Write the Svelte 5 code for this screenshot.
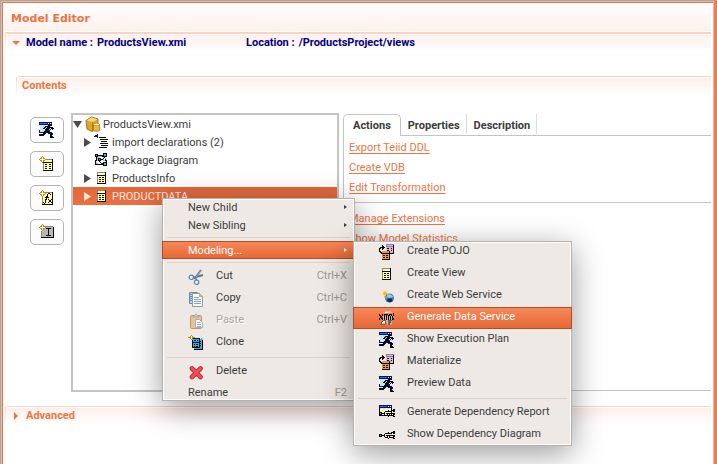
<script>
  const palette = {
    K: '#0a0a0a', N: '#10107c', B: '#2a6fd0', c: '#bfeaf2', W: '#ffffff', Y: '#ffffa0',
    G: '#8a8a7c', g: '#b08a1c', w: '#fff3a8', s: '#b8b8b8', P: '#d9b8e6', p: '#8f7aa0',
    O: '#f59a14', o: '#b8700c', C: '#1fb4f0', D: '#5a5a5a', t: '#d9b79c', r: '#8b5a40', T: '#39c5c5'
  };

  const sprites = {
    run: [
      'NNNNNNNNNNNNN...',
      'NBBBBBBBNWNWN...',
      'NNNNNNNNNKKKN...',
      'cccccccccKKKN...',
      'WcccccKKKKKc....',
      'WccccKNcKKKKKK..',
      'WcccKKcKKKNcKKK.',
      'WcccccKKKNcN.N..',
      'NcccccKKKNN.....',
      'NccccKKKKKN.....',
      'NNNNKKNNKKKKN...',
      '....KKN..NNKKN..',
      'KKKKKN.....KKN..',
      'NKKKN......KK...',
      '...........KKN..',
      '...........KKKK.'
    ],
    table: [
      '................',
      '................',
      '...GGGGGGGGK....',
      '...GYYYYYYYK....',
      '...GYYYYYYYK....',
      '...KKKKKKKKK....',
      '...GYYYYYYYK....',
      '...GYKKYKKYK....',
      '...GYYYYYYYK....',
      '...GYKKYKKYK....',
      '...GYYYYYYYK....',
      '...GYKKYKKYK....',
      '...GYYYYYYYK....',
      '...KKKKKKKKK....'
    ],
    newTable: [
      '...g............',
      '..gwg...........',
      '.gg.gg..........',
      'gw...wgGGGGGGK..',
      '.gg.ggYYYYYYYK..',
      '..gwgYYYYYYYYK..',
      '...gKKKKKKKKKK..',
      '....GYYYYYYYYK..',
      '....GYKKYYKKYK..',
      '....GYYYYYYYYK..',
      '....GYKKYYKKYK..',
      '....GYYYYYYYYK..',
      '....GYKKYYKKYK..',
      '....GYYYYYYYYK..',
      '....KKKKKKKKKK..'
    ],
    newFunction: [
      '...g............',
      '..gwg...........',
      '.gg.ggGGGGGGGK..',
      'gw...wgYYKKYYK..',
      '.gg.ggYYKYYKYK..',
      '..gwgYYYKYYYYK..',
      '...gYYYKKYYYYK..',
      '...GYYKKKKYYYK..',
      '...GYYYKYYYYYK..',
      '...GYYKKYKYYKK..',
      '...GYYKYYYKKYK..',
      '...GYYKYYYKKYK..',
      '...GKYKYYKYYKK..',
      '...GYKYYYYYYYK..',
      '...KKKKKKKKKKK..'
    ],
    newIndex: [
      '...g............',
      '..gwg...........',
      '.gg.ggGGGGGGGG..',
      'gw...wgsssssssK.',
      '.gg.ggsKKKKKssK.',
      '..gwgssssKssssK.',
      '...gsssssKssssK.',
      '..GssssssKssssK.',
      '..GssssssKssssK.',
      '..GssssssKssssK.',
      '..GssssssKssssK.',
      '..GssssKKKKKssK.',
      '..GsssssssssssK.',
      '..KKKKKKKKKKKKK.'
    ],
    imports: [
      '...N............',
      '.NNN............',
      'NNNN............',
      '...N.KKKKKKK....',
      '................',
      '......KKKKKKKK..',
      '................',
      '.......KKKKKK...',
      '................',
      '......KKKKKKKK..',
      '................',
      '.......KKKKKKK..',
      '................',
      '.....KKKKKKKK...'
    ],
    diagram: [
      '................',
      '.........KKKK...',
      '.KKK.....KTTK...',
      '.KTKKKKKKKTTK...',
      '.KKKssssKKKKK...',
      '..KssWWWWsK.....',
      '..KsKKKWWKWs....',
      '..KsKTKKKsWK....',
      '.KKsKKKWWssKK...',
      '.KWWWKWWWWWsK...',
      '.KsWWWKWWKKKK...',
      '.KssWWWKKKTTK...',
      '.KKKKKKKKKTTK...',
      '.........KKKK...'
    ],
    pojo: [
      '.......pppppppp.',
      '...K...pPPPPPPK.',
      '...KK..pppppppK.',
      '.KKKKK.PPPPPPPK.',
      'KK.KK..PKKPPKPK.',
      'K..K...PPPPPPPK.',
      'K......PKKPPKPK.',
      'KK.OOOOOOOKPPPK.',
      '.KKOOOOOOOKPPPK.',
      '..KKKKKKKKKKKKK.',
      '...OOOOOOOK.....',
      '...OKKOKKOK.....',
      '...OOOOOOOK.....',
      '...OKKOKKOK.....',
      '...OOOOOOOK.....',
      '...KKKKKKKK.....'
    ],
    xml: [
      '................',
      '......tttttt....',
      '....ttWWWtttt...',
      '..............K.',
      'K..K.KKKK.KKK.K.',
      'KK.K.K.K.KK.K.K.',
      '.KKttKtKtKtKtK..',
      '.KKrtKtKtKtKtK..',
      'K.KKtKtKtKtKtKK.',
      'K..KtKtKtKtKsKK.',
      '....rrrttrrDD...',
      '...rWWrttrDDs...',
      '..rWWWrttrDDs...',
      '..rtttr.trDss...',
      '.rrrrr..trDs....'
    ],
    report: [
      'NNNNNNNNNNNNN...',
      'NBBBBBBBNWNWN...',
      'NNNNNNNNNNNNN...',
      'KccccccccccYK...',
      'KYYYYYYYYYYYK.KK',
      'KYYYYYYYYKYYKKKK',
      'KYYYYYKKKKKKK.KK',
      'KKKYYKYYYYYYK...',
      'KTKKKKYKKKKKKKKK',
      'KKKYYKYYKYKYK.KK',
      'KKKKKKKKKKKKKKK.',
      '.........K....KK'
    ],
    dependency: [
      '................',
      '................',
      '................',
      '................',
      '..............KK',
      '.........K..KKKK',
      '......KKKKKKK.KK',
      'KKK..K..........',
      'KTKKKK.KKKKKKKKK',
      'KKK..K..K.K...KK',
      '......KKK.KKKKK.',
      '.........K....KK'
    ],
    clone: [
      '...g............',
      '..gwg...........',
      'gggwggg.........',
      '..gwgKKKKKKK.ss.',
      '...gCCCCCCCKCCs.',
      '....KCKKCKCKCCK.',
      '....KCCCCCCKKCK.',
      '....KKKKKKKKCCK.',
      '....KCCCCCCKKCK.',
      '....KCKCKKCKCCK.',
      '....KCCCCCCKKCK.',
      '....KCKCKKCKCCK.',
      '....KKKKKKKKCCK.',
      '......GCCCCCCCK.',
      '......KKKKKKKKK.'
    ]
  };

  function runs(rows) {
    const out = [];
    rows.forEach((row, y) => {
      let x = 0;
      while (x < row.length) {
        let end = x + 1;
        while (end < row.length && row[end] === row[x]) end++;
        if (row[x] !== '.') out.push({ x, y, w: end - x, fill: palette[row[x]] });
        x = end;
      }
    });
    return out;
  }

  const tools = [
    { icon: 'run', label: 'Preview data' },
    { icon: 'newTable', label: 'New table' },
    { icon: 'newFunction', label: 'New function' },
    { icon: 'newIndex', label: 'New index' }
  ];

  const nodes = [
    { icon: 'imports', label: 'import declarations (2)', arrow: true },
    { icon: 'diagram', label: 'Package Diagram' },
    { icon: 'table', label: 'ProductsInfo', arrow: true },
    { icon: 'table', label: 'PRODUCTDATA', arrow: true, selected: true }
  ];

  const menu = [
    { label: 'New Child', more: true },
    { label: 'New Sibling', more: true },
    null,
    { label: 'Modeling...', more: true, active: true },
    null,
    { icon: 'cut', label: 'Cut', keys: 'Ctrl+X' },
    { icon: 'copy', label: 'Copy', keys: 'Ctrl+C' },
    { icon: 'paste', label: 'Paste', keys: 'Ctrl+V', disabled: true },
    { icon: 'clone', label: 'Clone' },
    null,
    { icon: 'delete', label: 'Delete' },
    { label: 'Rename', keys: 'F2' }
  ];

  const submenu = [
    { icon: 'pojo', label: 'Create POJO' },
    { icon: 'table', label: 'Create View' },
    { icon: 'web', label: 'Create Web Service' },
    { icon: 'xml', label: 'Generate Data Service', active: true },
    { icon: 'run', label: 'Show Execution Plan' },
    { icon: 'pojo', label: 'Materialize' },
    { icon: 'run', label: 'Preview Data' },
    null,
    { icon: 'report', label: 'Generate Dependency Report' },
    { icon: 'dependency', label: 'Show Dependency Diagram' }
  ];
</script>

{#snippet icon(name)}
  <svg class="icon" viewBox="0 0 16 16" aria-hidden="true">
    {#if sprites[name]}
      <g shape-rendering="crispEdges">
        {#each runs(sprites[name]) as r}
          <rect x={r.x} y={r.y} width={r.w} height="1" fill={r.fill} />
        {/each}
      </g>
    {:else if name === 'cut'}
      <path d="M13 1 6.5 10M15 6 6 8.5" stroke="#5f7590" stroke-width="2" fill="none" />
      <path d="M12.8 1.5 8 8.5" stroke="#a8b6c6" stroke-width=".7" />
      <circle cx="3.3" cy="8.3" r="2.2" fill="#edf3fa" stroke="#5685bd" stroke-width="1.2" />
      <circle cx="8.6" cy="13.2" r="2.2" fill="#edf3fa" stroke="#5685bd" stroke-width="1.2" />
      <path d="m7.8 9.2.8 2" stroke="#5f7590" stroke-width="1.4" />
    {:else if name === 'copy'}
      <path d="M1.5 1.5h8v11h-8z" fill="#c2d9e6" stroke="#6a8aa5" />
      <path d="M2 3.5h3m-3 2h3m-3 2h3m-3 2h3" stroke="#6787a5" />
      <path d="M4.5 2.5h7l3 3v10h-10z" fill="#f5f9fb" stroke="#8da19a" />
      <path d="M11.5 2.5v3h3z" fill="#e3cf75" stroke="#b39b4a" stroke-width=".7" />
      <path d="M6 6.5h5m-5 2h7m-7 2h7m-7 2h7" stroke="#83a6cf" />
    {:else if name === 'paste'}
      <rect x="2.5" y="2.5" width="11" height="13" rx="1" fill="#e9c48c" stroke="#ba9765" />
      <path d="M5 4V2.5h2L8 .8l1 1.7h2V4z" fill="#d9dcdf" stroke="#9299a3" stroke-width=".8" />
      <path d="M7.5 6.5h4l3 3v5h-7z" fill="#f7fafc" stroke="#9eb2c4" />
      <path d="M9 9.5h3m-3 2h4m-4 2h4" stroke="#90aed0" />
    {:else if name === 'delete'}
      <path d="m4 4.5 8.5 8.5M12.5 4.5 4 13" stroke="#c8252d" stroke-width="4.6" stroke-linecap="round" />
      <path d="m4 4.5 8.5 8.5M12.5 4.5 4 13" stroke="#ea5055" stroke-width="3" stroke-linecap="round" />
    {:else if name === 'web'}
      <circle cx="6" cy="5.5" r="3.2" fill="#fde7a8" />
      <circle cx="6" cy="5.5" r="2" fill="#f8b637" />
      <circle cx="10.5" cy="10" r="4.5" fill="#3b78b8" />
      <path d="M8 6.5c3-1 5 .2 6.6 2.5-2 1-3.3-.5-4 1.500L8 9z" fill="#9cc4e4" />
      <path d="M8 12c1-2 3.5-2 5-1l.5 2c-2 2-4.5 1.500-5.500-1z" fill="#172b50" />
      <path d="M5 8.500 8 8l-1 4z" fill="#79b65a" />
    {:else if name === 'model'}
      <path d="M1 4.500 6.500 1 13 3v9l-6 3.500L2 13z" fill="#e0a32f" stroke="#a8731d" />
      <path d="M1.500 4.500 6.500 1.500l6 2L7.500 6z" fill="#f8d877" />
      <path d="M7.500 6v9" stroke="#b47c1c" />
      <path d="M8.500 8.500v5.500c0 1.800 6 1.800 6 0V8.500z" fill="#edb846" stroke="#a8731d" stroke-width=".8" />
      <ellipse cx="11.500" cy="8.500" rx="3" ry="1.300" fill="#fff0bd" stroke="#b47c1c" stroke-width=".7" />
    {/if}
  </svg>
{/snippet}

{#snippet items(list)}
  {#each list as item}
    {#if item}
      <button class="item" class:with-icon={item.icon} class:active={item.active} disabled={item.disabled} role="menuitem">
        {#if item.icon}{@render icon(item.icon)}{/if}
        <span class="label">{item.label}</span>
        {#if item.keys}<span class="keys">{item.keys}</span>{/if}
        {#if item.more}<svg class="more" viewBox="0 0 3 4" aria-hidden="true"><path d="M0 0 3 2 0 4z" fill="currentColor" /></svg>{/if}
      </button>
    {:else}
      <hr />
    {/if}
  {/each}
{/snippet}

<div class="frame">
  <main>
    <h1>Model Editor</h1>

    <section class="overview">
      <button class="toggle" aria-label="Collapse overview" aria-expanded="true">
        <svg width="8" height="4" viewBox="0 0 8 4"><path d="M0 0h8L4 4z" fill="#ee7443" /></svg>
      </button>
      <dl>
        <div class="model-name"><dt>Model name :</dt><dd>ProductsView.xmi</dd></div>
        <div><dt>Location :</dt><dd>/ProductsProject/views</dd></div>
      </dl>
    </section>

    <section class="contents">
      <h2>Contents</h2>
      <div class="columns">
        <div class="tools">
          {#each tools as tool}
            <button class="tool" aria-label={tool.label}>{@render icon(tool.icon)}</button>
          {/each}
        </div>

        <div class="tree" role="tree" aria-label="Model contents">
          <div class="node root" role="treeitem" aria-selected="false" aria-expanded="true" tabindex="0">
            <svg class="twist" viewBox="0 0 9 9"><path d="M0 1h9L4.500 8z" fill="currentColor" /></svg>
            {@render icon('model')}
            <span>ProductsView.xmi</span>
          </div>
          {#each nodes as node}
            <div class="node" class:selected={node.selected} role="treeitem" aria-selected={!!node.selected} tabindex="-1">
              <svg class="twist" viewBox="0 0 9 9">{#if node.arrow}<path d="M1 0v9l7-4.500z" fill="currentColor" />{/if}</svg>
              {@render icon(node.icon)}
              <span>{node.label}</span>
            </div>
          {/each}
        </div>

        <div class="folder">
          <div class="tabs" role="tablist">
            <button class="tab current" role="tab" aria-selected="true">Actions</button>
            <button class="tab" role="tab" aria-selected="false">Properties</button>
            <button class="tab" role="tab" aria-selected="false">Description</button>
            <span class="rest"></span>
          </div>
          <div class="panel" role="tabpanel">
            <nav>
              <a href="#export">Export Teiid DDL</a>
              <a href="#vdb">Create VDB</a>
              <a href="#edit">Edit Transformation</a>
            </nav>
            <nav>
              <a href="#extensions">Manage Extensions</a>
              <a href="#statistics">Show Model Statistics</a>
            </nav>
          </div>
        </div>
      </div>
    </section>

    <section class="advanced">
      <button class="toggle" aria-label="Expand advanced" aria-expanded="false">
        <svg width="4" height="8" viewBox="0 0 4 8"><path d="M0 0v8l4-4z" fill="#ee7443" /></svg>
      </button>
      <h2>Advanced</h2>
    </section>
  </main>

  <div class="menu context" role="menu">
    {@render items(menu)}
    <div class="menu sub" role="menu">
      {@render items(submenu)}
    </div>
  </div>
</div>

<style>
  :global(body) { margin: 0; background: #fff; }

  .frame {
    position: relative;
    box-sizing: border-box;
    min-height: 100vh;
    overflow: hidden;
    border-top: 1px solid #aaa7a4;
    border-left: 1px solid #aaa7a4;
    border-right: 3px solid #ee7b51;
    background: #fff;
    color: #3c3c3c;
    font: 11px/18px Roboto, "Noto Sans", sans-serif;
  }
  main {
    box-sizing: border-box;
    min-height: 100vh;
    padding: 0 2px 0 3px;
    border-right: 1px solid #f6b79b;
    border-top: 1px solid #e8b8a4;
    border-left: 1px solid #e8b8a4;
    box-shadow: inset 1px 1px #ee7443;
  }
  h1, h2, dl, dd { margin: 0; }
  button { padding: 0; border: 0; background: none; color: inherit; font: inherit; }

  h1 {
    margin: 1px 0 0;
    padding: 2px 6px 0;
    border-bottom: 1px solid #f9d3c5;
    background: linear-gradient(#fff, #fdf0eb) 0 0 / 100% 28px no-repeat;
    color: #ee7443;
    font: bold 11px/27px "DejaVu Sans", sans-serif;
  }
  section { position: relative; border-top: 1px solid #f9d3c5; border-top-left-radius: 3px; }
  section::before {
    content: "";
    position: absolute;
    inset: 0 0 auto;
    height: 17px;
    border-image: linear-gradient(#f9d3c5, #fff) 1;
    border-width: 0 0 0 1px;
    border-style: solid;
    background: linear-gradient(#fdefea, #fff) 1px 1px no-repeat;
  }
  h2, dl, .toggle { position: relative; }
  h2 { color: #ee7443; font: inherit; font-weight: bold; }

  .overview { display: flex; min-height: 42px; }
  .toggle { display: flex; align-items: center; justify-content: center; width: 21px; height: 18px; }
  dl { display: flex; color: #000080; font-weight: bold; }
  dl div { display: flex; gap: 4px; height: 18px; }
  .model-name { width: 220px; }

  .contents { margin-left: 11px; }
  .contents h2 { padding-left: 6px; }
  .columns { display: flex; padding: 18px 0 14px 14px; }
  .tools { display: flex; flex-direction: column; gap: 8px; padding: 4px 7px 0 0; }
  .tool {
    display: grid;
    place-items: center;
    width: 34px;
    height: 26px;
    border: 1px solid #b4b4b4;
    border-radius: 5px;
    background: linear-gradient(#fff, #fafafa);
  }
  .icon { display: block; flex: none; width: 16px; height: 16px; }

  .tree {
    box-sizing: border-box;
    flex: 0 1 268px;
    min-height: 279px;
    border: 2px solid #c4c4c3;
    background: #fff;
  }
  .node { display: flex; align-items: center; height: 18px; padding-left: 10px; white-space: nowrap; }
  .node.root { padding-left: 0; }
  .node span { padding-top: 2px; }
  .node .icon { margin: 0 2px; }
  .node.root .icon { margin-left: 3px; }
  .twist { flex: none; width: 9px; height: 9px; color: #4c4c4c; }
  .selected { background: linear-gradient(#e2683a, #ea7042); color: #fde9e0; }
  .selected .twist { color: #fde3d8; }

  .folder { display: flex; flex: 1; flex-direction: column; margin: 1px 0 1px 4px; }
  .tabs { display: flex; align-items: flex-end; }
  .tab {
    height: 22px;
    padding: 3px 7px 0;
    border-bottom: 1px solid #c4c4c4;
    background: linear-gradient(#ddd, #ddd) 100% 0 / 1px 20px no-repeat;
    font-weight: bold;
  }
  .tab.current {
    padding: 1px 9px 0;
    border: 1px solid #c4c4c4;
    border-bottom: 0;
    border-radius: 5px 5px 0 0;
    background: #fff;
  }
  .rest { flex: 1; border-bottom: 1px solid #c4c4c4; }
  .panel { flex: 1; border-left: 1px solid #c4c4c4; border-bottom: 1px solid #c4c4c4; }
  nav { display: flex; flex-direction: column; align-items: flex-start; padding: 2px 5px 4px; line-height: 20px; }
  nav + nav { border-top: 1px solid #c4c4c4; padding-top: 6px; }
  a { color: #ee7443; text-decoration: underline; text-underline-offset: 2px; }

  .advanced { display: flex; }

  .menu {
    position: absolute;
    background: #eee9e4;
    box-shadow: inset 0 0 0 1px #b9b1a6, inset 0 0 0 2px #fff, 0 7px 30px rgba(0, 0, 0, .4);
  }
  .context { top: 197px; left: 161px; width: 193px; }
  .sub { top: 43px; left: 191px; width: 219px; }
  .item { display: flex; box-sizing: border-box; width: 100%; height: 18px; padding: 1px 8px 0 26px; text-align: left; }
  .item.with-icon { height: 22px; }
  .item .icon { margin: 2px 12px 0 0; }
  .label { flex: 1; white-space: nowrap; }
  .keys { color: #9c9893; }
  .item:disabled .label { color: #aaa59f; text-shadow: 1px 1px #fff; }
  .more { width: 3px; height: 4px; margin-top: 6px; }
  .active {
    background: linear-gradient(#f7895b, #e56635);
    box-shadow: inset 0 0 0 1px #b34e28;
    color: #fff;
  }
  hr { height: 1px; margin: 3px 5px; border: 0; background: #d9d3cd; }
</style>
